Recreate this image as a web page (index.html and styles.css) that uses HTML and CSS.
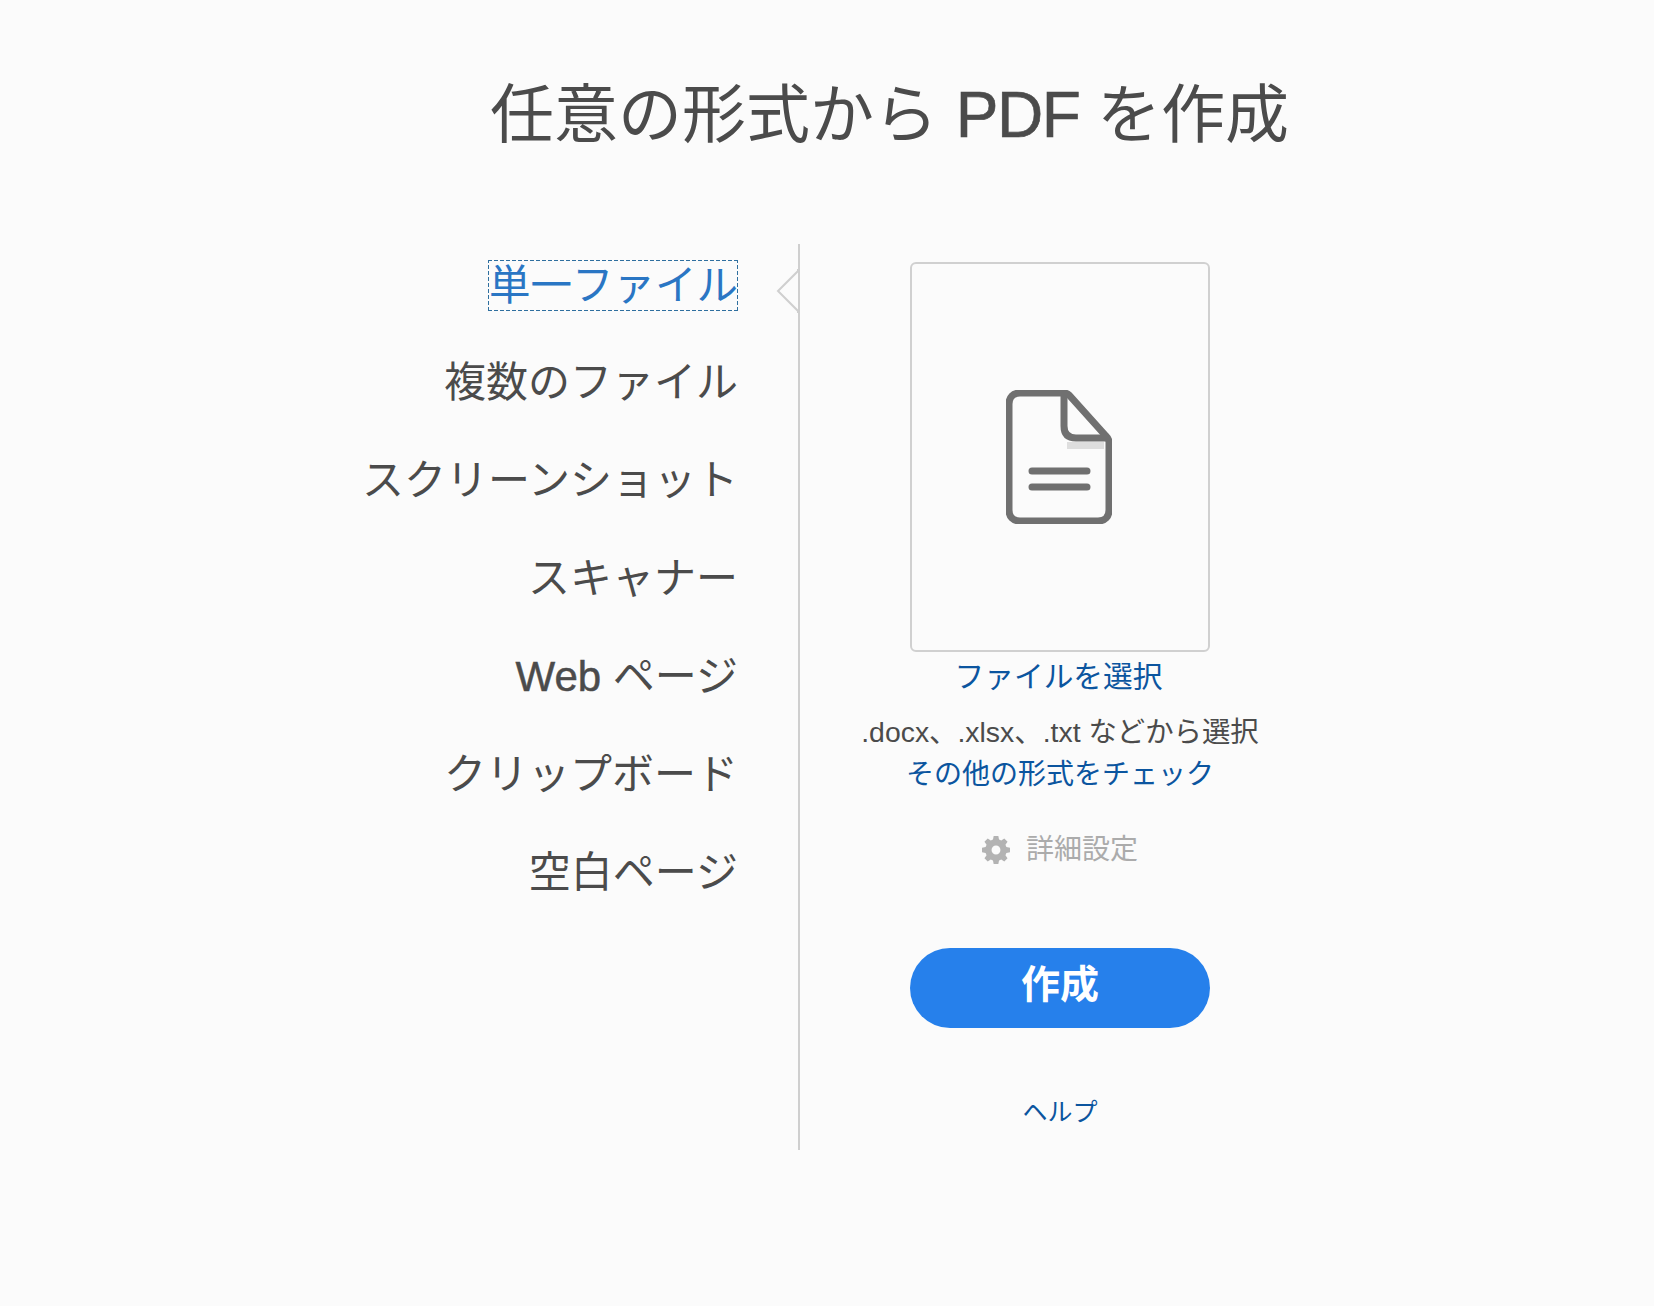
FILE: index.html
```html
<!DOCTYPE html>
<html lang="ja">
<head>
    <meta charset="UTF-8">
    <title>任意の形式から PDF を作成</title>
    <link rel="stylesheet" href="styles.css">
</head>
<body>
    <h1 class="title">任意の形式から <span class="latin">PDF</span> を作成</h1>

    <div class="main">
        <!-- Source types -->
        <ul class="sources">
            <li class="source selected"><span>単一ファイル</span></li>
            <li class="source"><span>複数のファイル</span></li>
            <li class="source"><span>スクリーンショット</span></li>
            <li class="source"><span>スキャナー</span></li>
            <li class="source"><span><span class="web">Web</span> ページ</span></li>
            <li class="source"><span>クリップボード</span></li>
            <li class="source"><span>空白ページ</span></li>
        </ul>

        <div class="divider">
            <svg class="notch" width="24" height="44" viewBox="0 0 24 44">
                <path d="M22 0 L22 2 L2 22 L22 42 L22 44" fill="#fbfbfb" stroke="#cfcfcf" stroke-width="2"/>
            </svg>
        </div>

        <!-- Selected source -->
        <div class="panel">
            <div class="drop-box">
                <svg class="file-icon" width="106" height="134" viewBox="0 0 106 134">
                    <rect x="61" y="52" width="37" height="7" fill="#dedede"/>
                    <path d="M14 3 H58 C60 3 62 4 63 5 L100 46 C102 48 103 50 103 52 V120 C103 127 99 131 92 131 H14 C7 131 3 127 3 120 V14 C3 7 7 3 14 3 Z" fill="none" stroke="#707070" stroke-width="7"/>
                    <path d="M58 3 V36 C58 44 62 48 70 48 H102" fill="none" stroke="#707070" stroke-width="7"/>
                    <path d="M26 81 H81 M26 97 H81" fill="none" stroke="#707070" stroke-width="7" stroke-linecap="round"/>
                </svg>
            </div>
            <a class="link choose">ファイルを選択</a>
            <p class="hint">.docx、.xlsx、.txt などから選択</p>
            <a class="link check">その他の形式をチェック</a>
            <div class="settings">
                <svg width="28" height="28" viewBox="0 0 24 24">
                    <path fill="#b3b3b3" fill-rule="evenodd" d="M10 0h4l.6 3.100 1.900.8L19.100 2.100 21.900 4.900 20.100 7.500l.8 1.900L24 10v4l-3.100.6-.8 1.900 1.800 2.600-2.800 2.800-2.600-1.800-1.900.8L14 24h-4l-.6-3.100-1.900-.8-2.600 1.800-2.800-2.800 1.800-2.600-.8-1.900L0 14v-4l3.100-.6.8-1.900L2.100 4.900 4.900 2.100 7.500 3.900l1.900-.8L10 0zM12 8.200a3.800 3.800 0 1 0 0 7.600 3.800 3.800 0 0 0 0-7.600z"/>
                </svg>
                <span>詳細設定</span>
            </div>
            <button class="create-btn">作成</button>
            <a class="link help">ヘルプ</a>
        </div>
    </div>
</body>
</html>
```

FILE: styles.css
```css
body {
    margin: 0;
    height: 1306px;
    overflow: hidden;
    background-color: #fbfbfb;
    font-family: "Liberation Sans", "Noto Sans CJK JP", sans-serif;
    color: #4b4b4b;
}

.title {
    margin: 0;
    padding-top: 75px;
    padding-left: 490px;
    font-size: 64px;
    line-height: 80px;
    font-weight: normal;
}

.latin {
    letter-spacing: -1.5px;
    -webkit-text-stroke: 0.6px #4b4b4b;
}

.web {
    -webkit-text-stroke: 0.5px #4b4b4b;
}

.main {
    display: flex;
    margin-top: 89px;
}

.sources {
    list-style: none;
    margin: 0;
    padding: 0;
    width: 738px;
    flex-shrink: 0;
}

.source {
    display: flex;
    justify-content: flex-end;
    align-items: flex-start;
    height: 98px;
    font-size: 42px;
    line-height: 50px;
    padding-top: 16px;
    box-sizing: border-box;
}

.source.selected {
    color: #2a76c4;
    font-size: 41.500px;
}

/* dashed box, dash length of the default outline is too short */
.source.selected span {
    padding-left: 1px;
    line-height: 51px;
    background:
        repeating-linear-gradient(90deg, #2f6f9f 0 4px, transparent 4px 6px) top / 100% 1px no-repeat,
        repeating-linear-gradient(90deg, #2f6f9f 0 4px, transparent 4px 6px) bottom / 100% 1px no-repeat,
        repeating-linear-gradient(0deg, #2f6f9f 0 4px, transparent 4px 6px) left / 1px 100% no-repeat,
        repeating-linear-gradient(0deg, #2f6f9f 0 4px, transparent 4px 6px) right / 1px 100% no-repeat;
}

.divider {
    position: relative;
    width: 2px;
    height: 906px;
    margin-left: 60px;
    background-color: #cfcfcf;
}

.notch {
    position: absolute;
    left: -22px;
    top: 25px;
}

.panel {
    display: flex;
    flex-direction: column;
    align-items: center;
    width: 400px;
    margin-left: 60px;
    padding-top: 18px;
}

.drop-box {
    display: flex;
    align-items: center;
    justify-content: center;
    width: 300px;
    height: 390px;
    box-sizing: border-box;
    border: 2px solid #d0d0d0;
    border-radius: 6px;
}

.file-icon {
    margin-left: -2px;
}

.link {
    color: #0b559f;
}

.choose {
    font-size: 29.700px;
    line-height: 36px;
    margin-top: 7px;
    margin-right: 3px;
}

.hint {
    margin: 19px 0 0;
    font-size: 28.400px;
    line-height: 36px;
    white-space: nowrap;
}

.check {
    font-size: 28px;
    line-height: 36px;
    margin-top: 7px;
}

.settings {
    display: flex;
    align-items: center;
    gap: 16px;
    margin-top: 39px;
    font-size: 28px;
    line-height: 36px;
    color: #ababab;
}

.create-btn {
    width: 300px;
    height: 80px;
    margin-top: 80px;
    padding: 0 0 14px;
    border: none;
    border-radius: 40px;
    background-color: #2680eb;
    color: white;
    font-family: inherit;
    font-size: 39px;
    font-weight: bold;
}

.help {
    font-size: 25px;
    line-height: 32px;
    margin-top: 68px;
}
```
